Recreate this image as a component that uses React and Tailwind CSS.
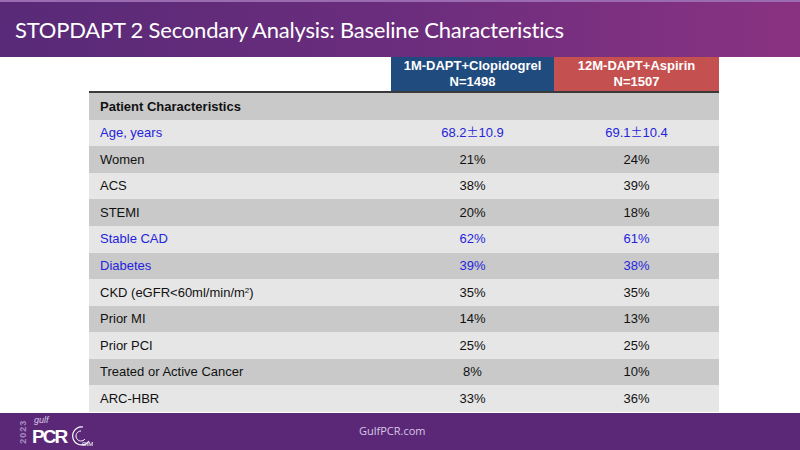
const rows = [
  { label: "Patient Characteristics", a: "", b: "", bold: true },
  { label: "Age, years", a: ["68.2", "10.9"], b: ["69.1", "10.4"], blue: true },
  { label: "Women", a: "21%", b: "24%" },
  { label: "ACS", a: "38%", b: "39%" },
  { label: "STEMI", a: "20%", b: "18%" },
  { label: "Stable CAD", a: "62%", b: "61%", blue: true },
  { label: "Diabetes", a: "39%", b: "38%", blue: true },
  { label: "CKD", a: "35%", b: "35%", ckd: true },
  { label: "Prior MI", a: "14%", b: "13%" },
  { label: "Prior PCI", a: "25%", b: "25%" },
  { label: "Treated or Active Cancer", a: "8%", b: "10%" },
  { label: "ARC-HBR", a: "33%", b: "36%" },
];

function Value({ v }) {
  if (Array.isArray(v)) {
    return (
      <span>
        {v[0]}
        <span className="font-['Noto_Sans_CJK_JP',sans-serif] text-[12px]">±</span>
        {v[1]}
      </span>
    );
  }
  return <span>{v}</span>;
}

function Logo() {
  return (
    <div className="flex items-center h-full pl-[19px] gap-[3px]">
      <div className="flex items-center justify-center w-[10px] h-[34px]">
        <span className="-rotate-90 text-[9px] font-bold tracking-[1px] text-[#a98bc4] whitespace-nowrap">2023</span>
      </div>
      <div className="flex flex-col">
        <span className="italic text-[9px] leading-[10px] text-[#d9c8e8] pl-[2px]">gulf</span>
        <span className="text-[19px] font-black text-white tracking-[-2px] leading-[24px]">PCR</span>
      </div>
      <svg width="24" height="24" viewBox="0 0 24 24" className="mt-[8px]">
        <path d="M14 3 A9 9 0 1 0 20 17" fill="none" stroke="#fff" strokeWidth="1.2" />
        <path d="M12 7 A5 5 0 1 0 16 15" fill="none" stroke="#fff" strokeWidth="1" />
        <text x="13" y="22" fontSize="6" fill="#fff" fontFamily="Liberation Sans, sans-serif">GIM</text>
      </svg>
    </div>
  );
}

export default function App() {
  return (
    <div className="w-[800px] h-[450px] flex flex-col bg-white overflow-hidden font-['Liberation_Sans',Arial,sans-serif]">
      <div className="h-[57px] shrink-0 bg-gradient-to-r from-[#582a77] via-[#6b2d7d] to-[#8a3282] border-t-2 border-[#9a6bb0] flex items-center pl-[15px]">
        <h1 className="text-white text-[22px] font-['Lato',sans-serif] tracking-[-0.2px]">STOPDAPT 2 Secondary Analysis: Baseline Characteristics</h1>
      </div>

      <div className="flex-1 pl-[89px]">
        <div className="w-[630px] flex flex-col">
          <div className="flex h-[36px] border-b-2 border-[#3a3a3a]">
            <div className="w-[302px]" />
            <div className="w-[163px] bg-[#1f4b7f] flex flex-col items-center justify-center text-white font-bold text-[13px] leading-[16px]">
              <span>1M-DAPT+Clopidogrel</span>
              <span>N=1498</span>
            </div>
            <div className="w-[165px] bg-[#c4504f] flex flex-col items-center justify-center text-white font-bold text-[13px] leading-[16px]">
              <span>12M-DAPT+Aspirin</span>
              <span>N=1507</span>
            </div>
          </div>
          <div className="grid grid-rows-12 h-[319px]">
            {rows.map((r, i) => (
              <div
                key={i}
                className={`flex items-center text-[13px] ${i % 2 === 0 ? "bg-[#c9c9c9]" : "bg-[#e6e6e6]"} ${r.blue ? "text-[#2424dc]" : "text-[#111]"}`}
              >
                <div className={`w-[302px] pl-[11px] ${r.bold ? "font-bold" : ""}`}>
                  {r.ckd ? (
                    <span>CKD (eGFR&lt;60ml/min/m<sup className="text-[8px]">2</sup>)</span>
                  ) : (
                    r.label
                  )}
                </div>
                <div className="w-[163px] text-center"><Value v={r.a} /></div>
                <div className="w-[165px] text-center"><Value v={r.b} /></div>
              </div>
            ))}
          </div>
        </div>
      </div>

      <div className="h-[37px] shrink-0 bg-[#5b2877] flex items-center">
        <div className="w-[300px] h-full">
          <Logo />
        </div>
        <span className="pl-[59px] text-[11px] text-[#d8c6e6] font-['Open_Sans',sans-serif]">GulfPCR.com</span>
      </div>
    </div>
  );
}
